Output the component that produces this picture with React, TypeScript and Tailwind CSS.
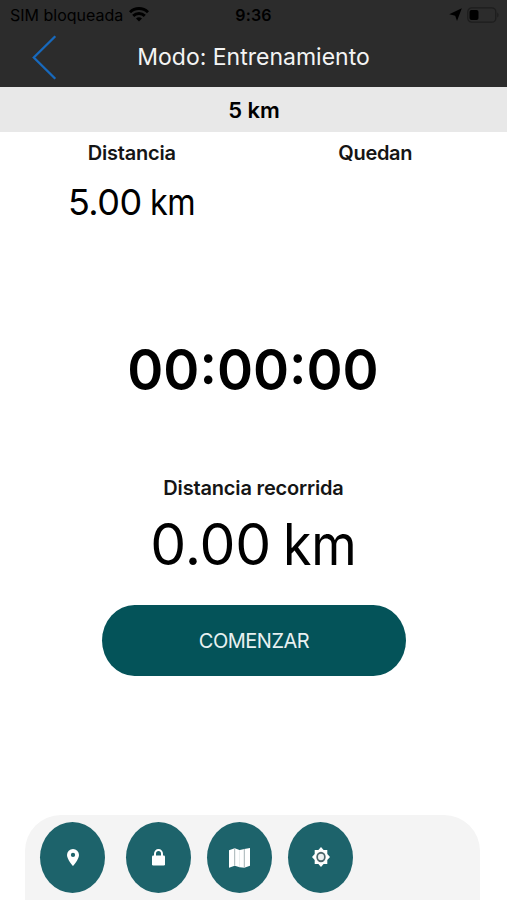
import React from 'react';

interface RoundButtonProps {
    label: string;
    children: React.ReactNode;
}

const RoundButton: React.FC<RoundButtonProps> = ({ label, children }) => {
    return (
        <button
            aria-label={label}
            className="flex h-[71px] w-[65px] shrink-0 items-center justify-center rounded-[50%] bg-[#1d636b] text-white"
        >
            {children}
        </button>
    );
};

const StatusBar: React.FC = () => {
    return (
        <div className="flex h-[29px] items-center text-black">
            <div className="flex flex-1 items-center pl-[10px]">
                <span className="text-[16px] whitespace-nowrap">SIM bloqueada</span>
                <svg className="ml-[6px] h-[15px] w-[20px]" viewBox="0 0 20 15" fill="none" stroke="currentColor" strokeWidth="2.9">
                    <path d="M1 5.2C6 .2 14 .2 19 5.2" />
                    <path d="M4.2 8.9c3.3-3.2 8.3-3.2 11.6 0" />
                    <path d="M7 11.4c1.8-1.7 4.2-1.7 6 0l-3 3.2z" fill="currentColor" stroke="none" />
                </svg>
            </div>
            <span className="-ml-[2px] text-[16px] font-semibold tracking-[0.2px]">9:36</span>
            <div className="flex flex-1 items-center justify-end pr-[8px]">
                <svg className="h-[13px] w-[13px]" viewBox="0 0 13 13" fill="currentColor">
                    <path d="M12.8.2 8 13 6.2 7.7.2 6.2z" />
                </svg>
                <svg className="ml-[5px] h-[16px] w-[32px]" viewBox="0 0 32 16" fill="none">
                    <rect x=".8" y=".8" width="28" height="14.4" rx="4" stroke="#1d1d1d" strokeWidth="1.3" />
                    <rect x="2.5" y="3" width="9" height="10" rx="2" fill="#000" />
                    <path d="M30.3 5.5c1.6.8 1.6 4.2 0 5z" fill="#1d1d1d" />
                </svg>
            </div>
        </div>
    );
};

const App: React.FC = () => {
    return (
        <div className="flex h-[900px] w-[507px] flex-col overflow-hidden bg-white font-['Inter',sans-serif] text-black">
            <header className="h-[87px] bg-[#2c2c2c]">
                <StatusBar />
                <div className="grid h-[57px] grid-cols-[100px_1fr_100px] items-center">
                    <svg className="ml-[32px] h-[45px] w-[25px]" viewBox="0 0 25 45" fill="none" stroke="#1769bd" strokeWidth="2.3">
                        <path d="M23.3 1.2 1.8 22.5l21.5 21.3" />
                    </svg>
                    <h1 className="text-center text-[23px] whitespace-nowrap text-[#f4f4f4]">Modo: Entrenamiento</h1>
                </div>
            </header>

            <div className="flex h-[45px] items-center justify-center bg-[#e8e8e8] pt-[2px] pl-px text-[22px] font-semibold">
                5 km
            </div>

            <section className="grid h-[190px] grid-cols-2 px-[10px] text-center">
                <div>
                    <h2 className="mt-[6px] text-[20px] leading-[31px] font-semibold tracking-[-0.2px] text-[#151515]">Distancia</h2>
                    <p className="mt-[11px] text-[36px] leading-[44px] tracking-[-0.5px] [word-spacing:-1px]">
                        5.00 <span className="-mr-[5px] inline-block origin-left scale-x-[0.9]">km</span>
                    </p>
                </div>
                <div>
                    <h2 className="mt-[6px] text-[20px] leading-[31px] font-semibold tracking-[-0.3px] text-[#151515]">Quedan</h2>
                </div>
            </section>

            <div className="flex h-[96px] items-center justify-center text-[57px] font-semibold">
                <span className="-ml-px scale-x-[0.96]">00:00:00</span>
            </div>

            <section className="mt-[55px] text-center">
                <h2 className="text-[20px] leading-[31px] font-semibold tracking-[-0.17px] text-[#151515]">Distancia recorrida</h2>
                <p className="mt-[7px] text-[57px] leading-[68px] tracking-[-0.2px] [word-spacing:-4px]">
                    0.00 <span className="-mr-[7px] inline-block origin-left scale-x-[0.91]">km</span>
                </p>
            </section>

            <button className="mt-[26px] ml-[102px] h-[71px] w-[304px] rounded-[33px/36px] bg-[#045359] text-[20px] tracking-[-0.5px] text-[#e8f1f1]">
                COMENZAR
            </button>

            <nav className="mt-auto ml-[25px] flex h-[85px] w-[455px] rounded-t-[36px] bg-[#f4f4f4] pt-[7px] pl-[15px]">
                <RoundButton label="Ubicación">
                    <svg className="h-[17px] w-[12px]" viewBox="5 2 14 20" preserveAspectRatio="none" fill="currentColor">
                        <path d="M12 2a7 7 0 0 0-7 7c0 5.25 7 13 7 13s7-7.75 7-13a7 7 0 0 0-7-7zm0 9.5a2.5 2.5 0 1 1 0-5 2.5 2.5 0 0 1 0 5z" />
                    </svg>
                </RoundButton>
                <div className="ml-[21px] flex gap-4">
                    <RoundButton label="Bloquear">
                        <svg className="mb-px h-[17px] w-[13px]" viewBox="0 0 13 17" fill="none">
                            <path d="M3 8V4.8a3.5 3.8 0 0 1 7 0V8" stroke="currentColor" strokeWidth="2" />
                            <rect y="6.5" width="13" height="10" rx="1.2" fill="currentColor" />
                        </svg>
                    </RoundButton>
                    <RoundButton label="Mapa">
                        <svg className="h-[20px] w-[21px]" viewBox="0 0 21 20">
                            <path d="M0 2.2 5.7.2l4.8 1.9h.3L15.3.9 21 0v17.8l-5.7 2-4.5-.5-5.1-1.5L0 19.8z" fill="#fff" />
                            <path d="M5.7.4v17.2M15.3.9v18.6" stroke="#9aa9ab" strokeWidth=".9" />
                            <path d="M10.5 2.1v17" stroke="#dfe6e7" strokeWidth=".7" />
                        </svg>
                    </RoundButton>
                    <RoundButton label="Ajustes">
                        <svg className="mb-px h-[20px] w-[18px]" viewBox="0 0 22 22" preserveAspectRatio="none">
                            <path d="M11 0 14.2 3.3h4.5v4.5L22 11l-3.3 3.2v4.5h-4.5L11 22l-3.2-3.3H3.3v-4.5L0 11l3.3-3.2V3.3h4.5z" fill="#fff" />
                            <circle cx="11" cy="11" r="4.7" fill="#edf1f2" stroke="#4d666b" strokeWidth="2.1" />
                        </svg>
                    </RoundButton>
                </div>
            </nav>
        </div>
    );
};

export default App;
